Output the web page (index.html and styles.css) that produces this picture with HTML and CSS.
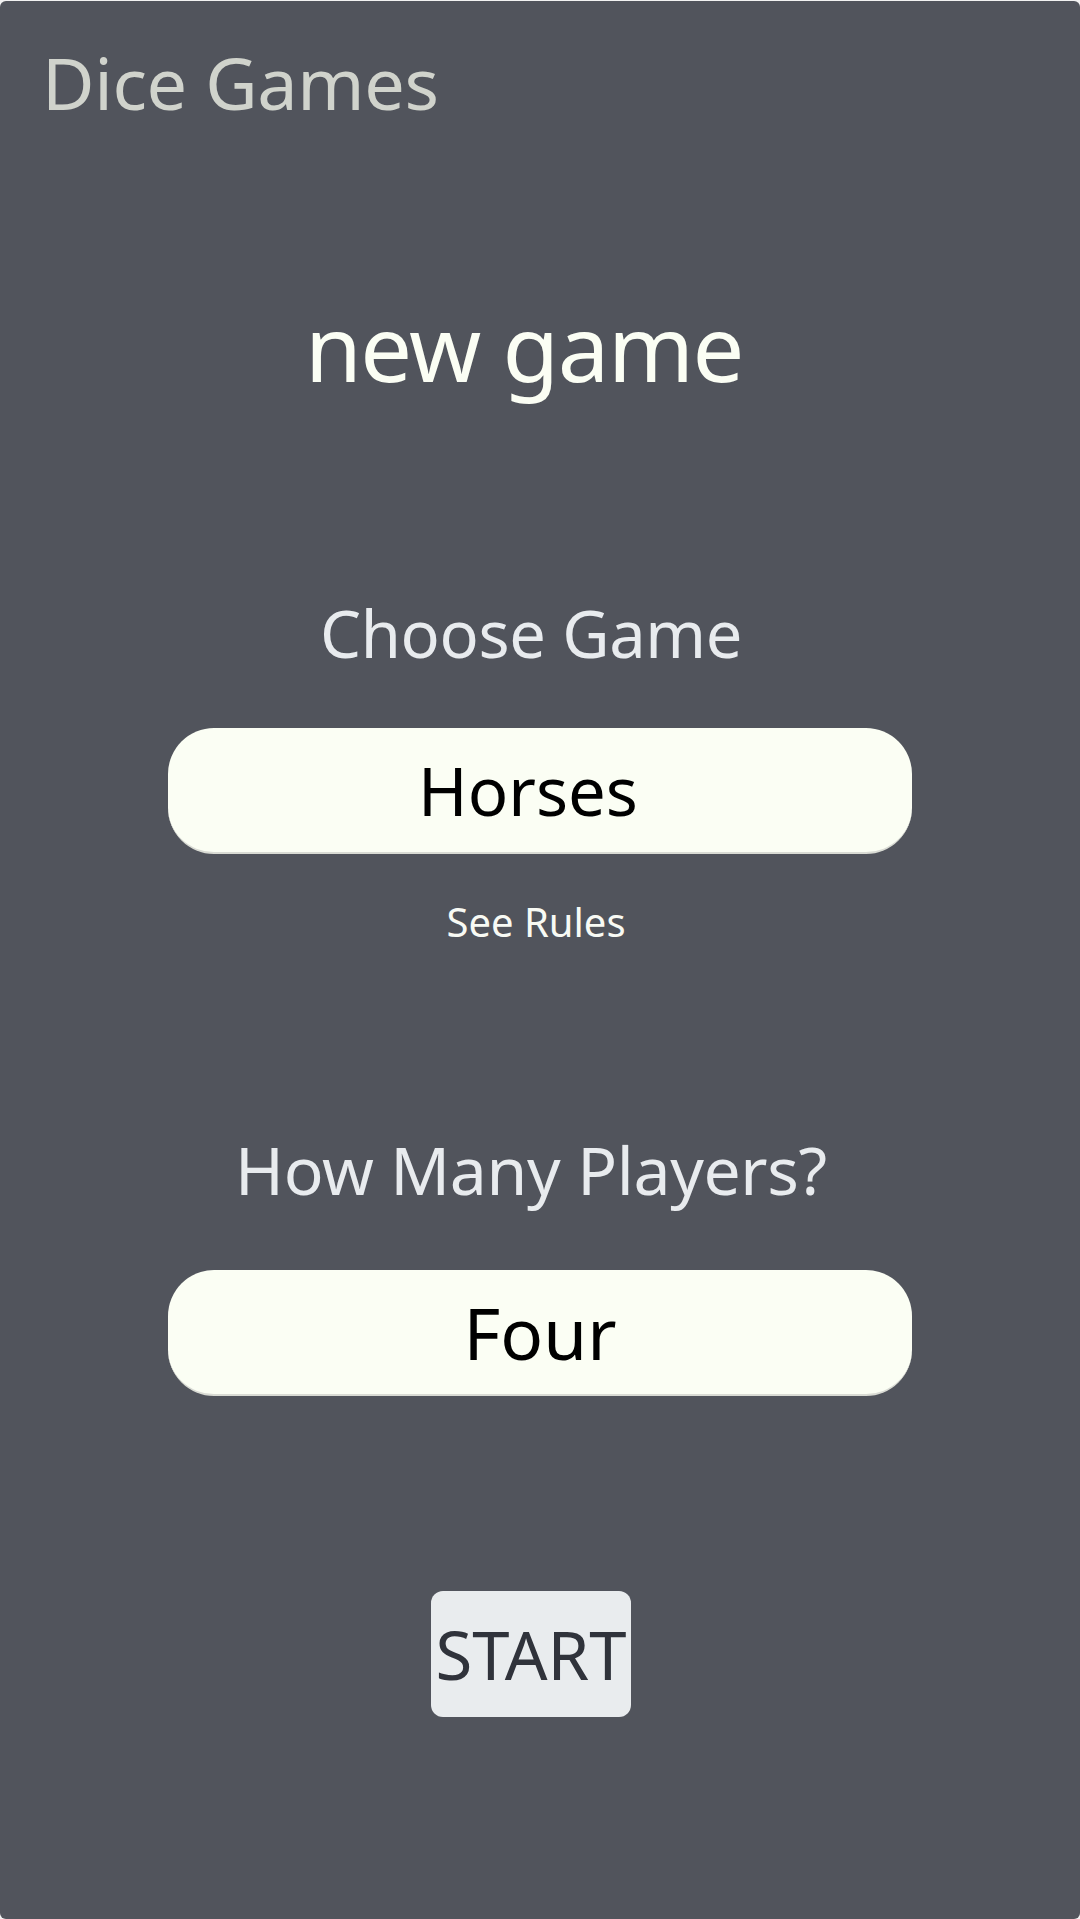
FILE: index.html
```html
<!DOCTYPE html>
<html lang="en">
<head>
<meta charset="utf-8">
<title>Dice Games</title>
<link rel="stylesheet" href="styles.css">
</head>
<body>
<div class="card">
  <header class="header">
    <div class="brand">Dice Games</div>
  </header>
  <main class="content">
    <h1 class="title">new game</h1>
    <h2 class="label label-game">Choose Game</h2>
    <div class="select select-game">Horses</div>
    <a class="rules">See Rules</a>
    <h2 class="label label-players">How Many Players?</h2>
    <div class="select select-players">Four</div>
    <button class="start">START</button>
  </main>
</div>
</body>
</html>
```
FILE: styles.css
```css
html, body {
  margin: 0;
  padding: 0;
  background: #f2f2f2;
}
body {
  font-family: "Noto Sans", "Open Sans", sans-serif;
}
.card {
  margin-top: 1px;
  height: 1918px;
  background: #51545c;
  border-radius: 6px;
  overflow: hidden;
  display: flex;
  flex-direction: column;
}
.header {
  padding: 45px 0 0 42px;
}
.brand {
  font-size: 72px;
  line-height: 72px;
  letter-spacing: -0.005em;
  color: #d0d3cc;
}
.content {
  display: flex;
  flex-direction: column;
  align-items: center;
}
.title {
  margin: 183px 0 0;
  padding-right: 32px;
  font-size: 92px;
  line-height: 92px;
  letter-spacing: -0.015em;
  font-weight: 400;
  color: #fbfef4;
}
.label {
  margin: 0;
  padding-right: 18px;
  font-size: 65px;
  line-height: 65px;
  letter-spacing: -0.005em;
  font-weight: 400;
  color: #e8ebee;
}
.label-game {
  margin-top: 208px;
}
.label-players {
  margin-top: 194px;
  font-size: 66px;
  line-height: 66px;
}
.select {
  box-sizing: border-box;
  width: 744px;
  height: 126px;
  background: #fbfef4;
  border-radius: 46px;
  border-bottom: 2px solid #d9dbd4;
  display: flex;
  align-items: center;
  justify-content: center;
  font-size: 67px;
  line-height: 67px;
  color: #000;
}
.select-game {
  margin-top: 62px;
  padding-right: 24px;
}
.select-players {
  margin-top: 68px;
  font-size: 71px;
  line-height: 71px;
}
.rules {
  margin-top: 48px;
  padding-right: 8px;
  font-size: 40px;
  line-height: 40px;
  color: #f8faf4;
  text-decoration: none;
}
.start {
  margin-top: 195px;
  width: 200px;
  height: 126px;
  padding: 0;
  margin-right: 18px;
  border: none;
  border-radius: 12px;
  background: #e9ecee;
  color: #30333b;
  font-family: "Noto Sans", "Open Sans", sans-serif;
  font-size: 67px;
  line-height: 67px;
  display: flex;
  align-items: center;
  justify-content: center;
  overflow: visible;
  white-space: nowrap;
}
```
